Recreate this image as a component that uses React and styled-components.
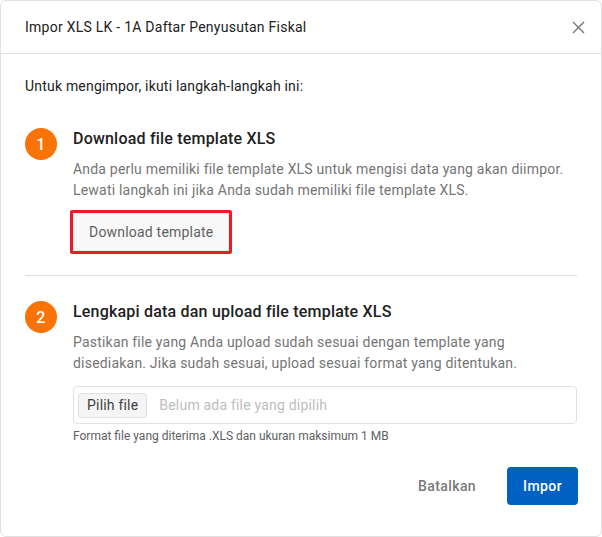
import React from "react";
import styled, { createGlobalStyle } from "styled-components";

const GlobalStyle = createGlobalStyle`
  * { box-sizing: border-box; }
  body {
    margin: 0;
    font-family: Roboto, "Liberation Sans", Arial, sans-serif;
    letter-spacing: 0.2px;
    background: #ffffff;
  }
`;

const Modal = styled.div`
  width: 602px;
  height: 537px;
  border: 1px solid #e0e0e0;
  border-radius: 6px;
  background: #fff;
  display: flex;
  flex-direction: column;
`;

const Header = styled.div`
  height: 53px;
  flex-shrink: 0;
  display: flex;
  align-items: center;
  justify-content: space-between;
  padding: 0 12px 0 24px;
  border-bottom: 1px solid #e0e0e0;
`;

const Title = styled.span`
  font-size: 14px;
  letter-spacing: 0.25px;
  color: #212121;
`;

const CloseButton = styled.button`
  border: none;
  background: none;
  padding: 0;
  width: 22px;
  height: 22px;
  display: flex;
  align-items: center;
  justify-content: center;
  cursor: pointer;
`;

const Body = styled.div`
  flex: 1;
  display: flex;
  flex-direction: column;
  padding: 22px 24px 0;
`;

const Intro = styled.p`
  margin: 0;
  font-size: 14px;
  line-height: 20px;
  color: #212121;
`;

const Step = styled.div`
  display: flex;
  gap: 16px;
  margin-top: ${(p) => p.$top}px;
`;

const StepNumber = styled.div`
  width: 32px;
  height: 32px;
  flex-shrink: 0;
  border-radius: 50%;
  background: #f97306;
  color: #fff;
  font-size: 16px;
  font-weight: 500;
  display: flex;
  align-items: center;
  justify-content: center;
  margin-top: 1px;
`;

const StepContent = styled.div`
  flex: 1;
  display: flex;
  flex-direction: column;
  align-items: flex-start;
`;

const StepTitle = styled.h3`
  margin: 0;
  font-size: 16px;
  line-height: 24px;
  font-weight: 500;
  color: #212121;
`;

const StepText = styled.p`
  margin: 8px 0 0;
  font-size: 14px;
  line-height: 20.5px;
  color: #757575;
`;

const Highlight = styled.div`
  margin-top: 10px;
  margin-left: -3px;
  border: 3px solid #ed1c24;
  border-radius: 2px;
`;

const GhostButton = styled.button`
  height: 38px;
  padding: 0 15px;
  border: 1px solid #ececec;
  background: #f8f8f8;
  font-family: inherit;
  font-size: 14px;
  letter-spacing: 0.2px;
  color: #616161;
  cursor: pointer;
`;

const Divider = styled.hr`
  margin: 21px 0 0;
  border: none;
  border-top: 1px solid #e0e0e0;
`;

const FileBox = styled.div`
  align-self: stretch;
  margin-top: 13px;
  height: 38px;
  border: 1px solid #e0e0e0;
  border-radius: 4px;
  display: flex;
  align-items: center;
  padding: 0 5px 0 4px;
  gap: 12px;
`;

const FileButton = styled.button`
  height: 25px;
  padding: 0 8px;
  border: 1px solid #e0e0e0;
  border-radius: 3px;
  background: #f5f5f5;
  font-family: inherit;
  font-size: 14px;
  letter-spacing: 0.2px;
  color: #424242;
`;

const FilePlaceholder = styled.span`
  font-size: 14px;
  color: #bdbdbd;
`;

const Hint = styled.span`
  margin-top: 4px;
  font-size: 12px;
  line-height: 16px;
  letter-spacing: 0;
  color: #616161;
`;

const Footer = styled.div`
  display: flex;
  justify-content: flex-end;
  align-items: center;
  gap: 15px;
  padding: 21px 23px 31px;
`;

const Button = styled.button`
  height: 38px;
  padding: 0 16px;
  border: none;
  border-radius: 4px;
  font-family: inherit;
  font-size: 14px;
  font-weight: 500;
  letter-spacing: 0.4px;
  cursor: pointer;
  background: ${(p) => (p.$primary ? "#0061c2" : "transparent")};
  color: ${(p) => (p.$primary ? "#ffffff" : "#7a7a7a")};
`;

export default function App() {
  return (
    <>
      <GlobalStyle />
      <Modal>
        <Header>
          <Title>Impor XLS LK - 1A Daftar Penyusutan Fiskal</Title>
          <CloseButton aria-label="Tutup">
            <svg width="13" height="13" viewBox="0 0 13 13">
              <path d="M1 1L12 12M12 1L1 12" stroke="#757575" strokeWidth="1.4" />
            </svg>
          </CloseButton>
        </Header>
        <Body>
          <Intro>Untuk mengimpor, ikuti langkah-langkah ini:</Intro>
          <Step $top={31}>
            <StepNumber>1</StepNumber>
            <StepContent>
              <StepTitle>Download file template XLS</StepTitle>
              <StepText>
                Anda perlu memiliki file template XLS untuk mengisi data yang akan diimpor.
                <br />
                Lewati langkah ini jika Anda sudah memiliki file template XLS.
              </StepText>
              <Highlight>
                <GhostButton>Download template</GhostButton>
              </Highlight>
            </StepContent>
          </Step>
          <Divider />
          <Step $top={24}>
            <StepNumber>2</StepNumber>
            <StepContent>
              <StepTitle>Lengkapi data dan upload file template XLS</StepTitle>
              <StepText>
                Pastikan file yang Anda upload sudah sesuai dengan template yang
                <br />
                disediakan. Jika sudah sesuai, upload sesuai format yang ditentukan.
              </StepText>
              <FileBox>
                <FileButton>Pilih file</FileButton>
                <FilePlaceholder>Belum ada file yang dipilih</FilePlaceholder>
              </FileBox>
              <Hint>Format file yang diterima .XLS dan ukuran maksimum 1 MB</Hint>
            </StepContent>
          </Step>
        </Body>
        <Footer>
          <Button>Batalkan</Button>
          <Button $primary>Impor</Button>
        </Footer>
      </Modal>
    </>
  );
}
